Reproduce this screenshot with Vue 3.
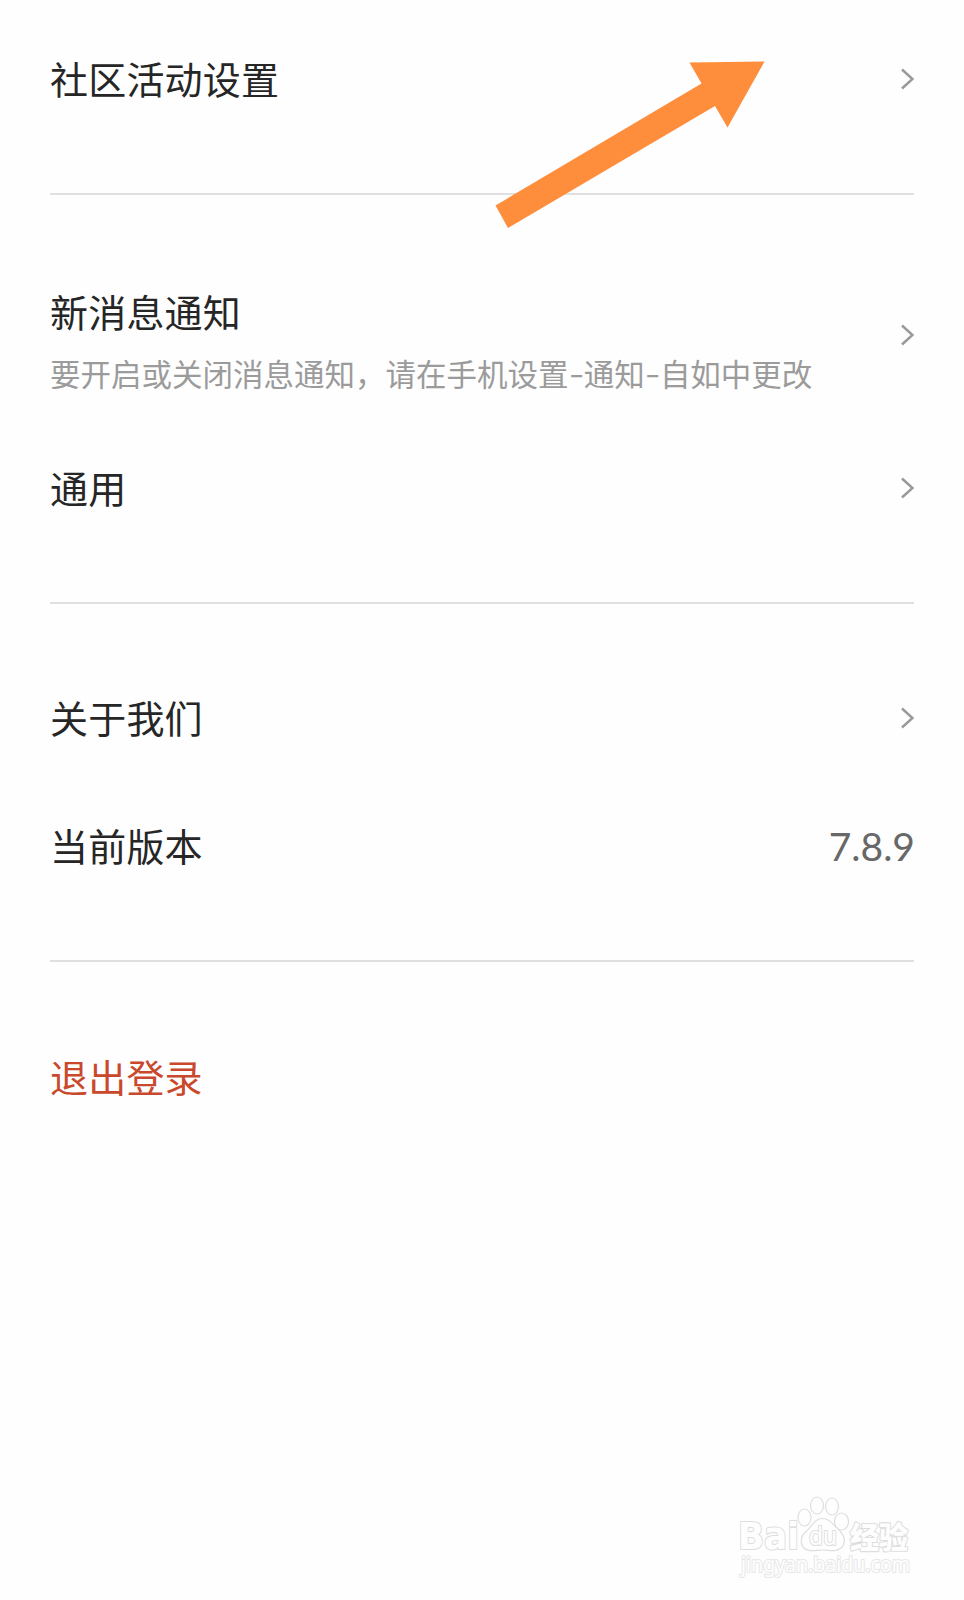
<script setup>
const sections = [
  [{ title: '社区活动设置', link: true }],
  [
    {
      title: '新消息通知',
      note: ['要开启或关闭消息通知，请在手机设置', '通知', '自如中更改'],
      link: true,
    },
    { title: '通用', link: true },
  ],
  [
    { title: '关于我们', link: true },
    { title: '当前版本', value: '7.8.9' },
  ],
  [{ title: '退出登录', danger: true }],
]
</script>

<template>
  <main class="page">
    <section v-for="(rows, s) in sections" :key="s" class="section">
      <div v-for="row in rows" :key="row.title" class="row" :class="{ tall: row.note }">
        <div class="label">
          <div class="title" :class="{ danger: row.danger }">{{ row.title }}</div>
          <div v-if="row.note" class="note">
            <template v-for="(part, i) in row.note" :key="i"><span v-if="i" class="dash">-</span>{{ part }}</template>
          </div>
        </div>
        <svg v-if="row.link" class="chevron" width="14" height="22" viewBox="0 0 14 22">
          <path d="M2 1.500 L12.500 11 L2 20.500" />
        </svg>
        <span v-if="row.value" class="value">{{ row.value }}</span>
      </div>
    </section>

    <svg class="arrow" width="272" height="170" viewBox="0 0 272 170">
      <path d="M0.5 145.5 L206.5 23.5 L194.500 2.5 L269.500 1.5 L232.500 67.5 L220 46 L13 168 Z" />
    </svg>

    <svg class="watermark" width="184" height="100" viewBox="0 0 184 100">
      <g class="outline">
        <text class="latin" x="3" y="59" textLength="61" lengthAdjust="spacingAndGlyphs">Bai</text>
        <ellipse cx="69.500" cy="27.500" rx="6.500" ry="8.500" />
        <ellipse cx="82" cy="15.500" rx="6.500" ry="8.500" />
        <ellipse cx="97" cy="16.500" rx="6.500" ry="8.500" />
        <ellipse cx="106.500" cy="31.500" rx="7" ry="8.500" />
        <path d="M87.500 28.500 C80 28.500 77 36 71.500 41 C66 46 65 51 67.500 56 C71 63 80 60 87.500 60 C95 60 103 63 108 56 C111 50 109 45 104 40 C98 35 95 28.500 87.500 28.500 Z" />
        <text class="du" x="74" y="54.500" textLength="28" lengthAdjust="spacingAndGlyphs">du</text>
        <text class="han" x="115" y="57.500" textLength="58" lengthAdjust="spacingAndGlyphs">经验</text>
        <text class="url" x="6" y="82" textLength="169" lengthAdjust="spacingAndGlyphs">jingyan.baidu.com</text>
      </g>
    </svg>
  </main>
</template>

<style>
body {
  margin: 0;
  background: #fefefe;
}
</style>

<style scoped>
.page {
  position: relative;
  box-sizing: border-box;
  width: 964px;
  height: 1600px;
  padding: 0 50px;
  overflow: hidden;
  background: #fefefe;
  font-family: "Noto Sans CJK SC", sans-serif;
}
.section {
  padding: 50px 0;
  border-bottom: 2px solid #e0e0e0;
}
.section:first-child {
  padding-top: 15px;
}
.section:nth-child(2) {
  padding-top: 51px;
}
.section:nth-child(3) {
  padding-bottom: 50px;
}
.section:nth-child(4) {
  padding-top: 51px;
  border-bottom: 0;
}
.row {
  display: flex;
  align-items: center;
  justify-content: space-between;
  height: 128px;
}
.row.tall {
  height: 178px;
}
.title {
  margin-top: -3px;
  font-size: 38px;
  line-height: 56px;
  letter-spacing: 0.2px;
  color: #262626;
  white-space: nowrap;
}
.danger {
  color: #c8492b;
}
.note {
  margin-top: 10px;
  font-size: 30.5px;
  line-height: 48px;
  color: #9b9b9b;
  white-space: nowrap;
}
.tall .label {
  padding-top: 12px;
}
.dash {
  position: relative;
  top: -1px;
  display: inline-block;
  width: 15.2px;
  text-align: center;
  transform: scaleX(1.4);
}
.chevron {
  display: block;
  flex: none;
}
.chevron path {
  fill: none;
  stroke: #999;
  stroke-width: 2.5;
}
.value {
  margin: -1px -1px 0 0;
  font-family: Lato, sans-serif;
  font-size: 39px;
  line-height: 48px;
  color: #686868;
}
.arrow {
  position: absolute;
  left: 495px;
  top: 60px;
}
.arrow path {
  fill: #ff8e3c;
}
.watermark {
  position: absolute;
  left: 735px;
  top: 1490px;
}
.outline {
  fill: #fefefe;
  stroke: #dedede;
  stroke-width: 1.2;
}
.outline text {
  paint-order: stroke;
  stroke-width: 2.2;
  stroke-linejoin: round;
}
.latin {
  font: 700 38px "DejaVu Sans", sans-serif;
}
.du {
  font: 400 25px "Noto Sans", sans-serif;
}
.han {
  font: 900 30px "Noto Sans CJK SC", sans-serif;
}
.outline .url {
  font: 400 21px "Noto Sans", sans-serif;
  stroke: #e8e8e8;
}
</style>
